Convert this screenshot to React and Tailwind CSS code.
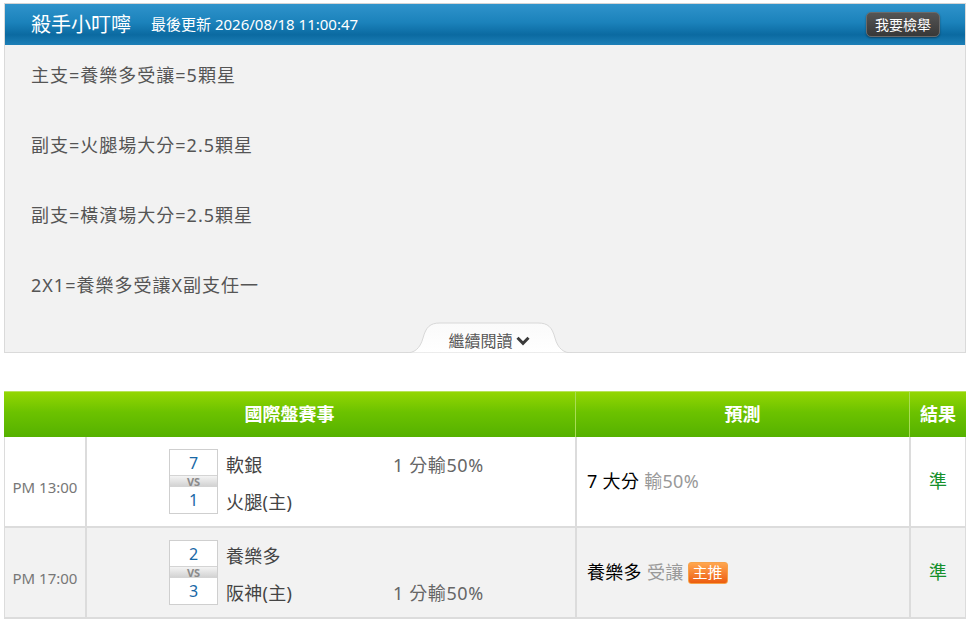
import React from 'react';

const font = { fontFamily: '"Noto Sans", "Noto Sans CJK TC", sans-serif' };

const games = [
  {
    time: 'PM 13:00',
    away: { score: 7, name: '軟銀' },
    home: { score: 1, name: '火腿(主)' },
    line: '1 分輸50%',
    lineOnHome: false,
    pick: '7 大分',
    pickNote: '輸50%',
    hot: false,
    result: '準',
  },
  {
    time: 'PM 17:00',
    away: { score: 2, name: '養樂多' },
    home: { score: 3, name: '阪神(主)' },
    line: '1 分輸50%',
    lineOnHome: true,
    pick: '養樂多',
    pickNote: '受讓',
    hot: true,
    result: '準',
  },
];

const tips = [
  '主支=養樂多受讓=5顆星',
  '副支=火腿場大分=2.5顆星',
  '副支=橫濱場大分=2.5顆星',
  '2X1=養樂多受讓X副支任一',
];

function ScoreBox({ away, home }) {
  return (
    <div className="w-[49px] border border-[#cfcfcf] bg-white text-center text-[16px] leading-none text-[#1768a6]">
      <div className="h-[25px] flex items-center justify-center">{away}</div>
      <div className="h-[12px] flex items-center justify-center bg-gradient-to-b from-[#f4f4f4] to-[#d3d3d3] border-y border-[#d4d4d4] text-[11px] font-bold text-[#8a8a8a]">
        VS
      </div>
      <div className="h-[26px] flex items-center justify-center">{home}</div>
    </div>
  );
}

function GameRow({ g, shaded }) {
  return (
    <div className={`flex h-[91px] border-b-2 border-[#dcdcdc] ${shaded ? 'bg-[#f2f2f2]' : 'bg-white'}`}>
      <div className="w-[82px] flex items-center justify-center text-[15px] text-[#777] border-r-2 border-[#dcdcdc] pt-[12px]">
        {g.time}
      </div>
      <div className="w-[490px] flex items-center pl-[82px] border-r-2 border-[#dcdcdc]">
        <ScoreBox away={g.away.score} home={g.home.score} />
        <div className="flex flex-col justify-between h-[64px] ml-[8px] w-[167px] text-[18px] text-[#444] leading-none tracking-[0.3px]">
          <div className="pt-[6px]">{g.away.name}</div>
          <div className="pb-[3px]">{g.home.name}</div>
        </div>
        <div className="flex flex-col justify-between h-[64px] text-[18px] text-[#666] leading-none tracking-[0.6px]">
          <div className="pt-[6px]">{g.lineOnHome ? '' : g.line}</div>
          <div className="pb-[3px]">{g.lineOnHome ? g.line : ''}</div>
        </div>
      </div>
      <div className="w-[334px] flex items-center pl-[10px] border-r-2 border-[#dcdcdc] text-[18px] tracking-[0.3px]">
        <span className="text-black">{g.pick}</span>
        <span className="ml-[5px] text-[#999]">{g.pickNote}</span>
        {g.hot && (
          <span className="ml-[4px] w-[40px] h-[22px] flex items-center justify-center rounded-[3px] border border-[#f7a24a] bg-gradient-to-b from-[#ffa64d] to-[#ec5c0c] text-white text-[15px] leading-none tracking-normal">
            主推
          </span>
        )}
      </div>
      <div className="flex-1 flex items-center justify-center text-[18px] text-[#16902b]">{g.result}</div>
    </div>
  );
}

export default function App() {
  return (
    <div className="w-[976px] h-[629px] bg-white overflow-hidden" style={font}>
      <div className="ml-[4px] mt-[3px] w-[962px] border border-[#dadada] border-t-[#d4d4d4]">
        {/* title bar */}
        <div className="h-[41px] flex items-center pl-[26px] pr-[25px] bg-[linear-gradient(to_bottom,#2f93cb_0%,#1b82bb_45%,#0b6aa1_75%,#1d7fb7_100%)]">
          <span className="text-[20px] text-white">殺手小叮嚀</span>
          <span className="ml-[20px] text-[15px] text-white">最後更新 2026/08/18 11:00:47</span>
          <span className="ml-auto h-[25px] w-[74px] flex items-center justify-center rounded-[5px] border border-[#6a6a6a] bg-gradient-to-b from-[#555] to-[#383838] text-[14px] text-white shadow-[0_1px_2px_rgba(0,0,0,0.4)]">
            我要檢舉
          </span>
        </div>

        {/* notes */}
        <div className="relative h-[307px] bg-[#f2f2f2] pl-[26px] pt-[17px]">
          {tips.map((t) => (
            <div key={t} className="h-[70px] text-[18px] text-[#555] leading-[26px] tracking-[1px]">
              {t}
            </div>
          ))}
          <div className="absolute left-[401px] bottom-[-1px] w-[166px] h-[31px]">
            <svg className="absolute inset-0" width="166" height="31" viewBox="0 0 166 31">
              <defs>
                <linearGradient id="tabFill" x1="0" y1="0" x2="0" y2="1">
                  <stop offset="0" stopColor="#fafafa" />
                  <stop offset="1" stopColor="#ffffff" />
                </linearGradient>
              </defs>
              <path
                d="M0 31 C8 31 14 27 17 16 C20 5 24 1 34 1 L132 1 C142 1 146 5 149 16 C152 27 158 31 166 31 Z"
                fill="url(#tabFill)"
                stroke="#d8d8d8"
                strokeWidth="1"
              />
            </svg>
            <div className="relative h-full flex items-center justify-center pt-[6px] text-[16px] text-[#555]">
              繼續閱讀
              <svg className="ml-[3px]" width="14" height="10" viewBox="0 0 14 10">
                <path d="M1.5 1.8 L7 7.3 L12.5 1.8" fill="none" stroke="#3a3a3a" strokeWidth="3" />
              </svg>
            </div>
          </div>
        </div>
      </div>

      {/* match table */}
      <div className="ml-[4px] mt-[38px] w-[962px]">
        <div className="flex h-[46px] border-t border-[#b8e35a] bg-[linear-gradient(to_bottom,#93d602_0%,#6cc200_45%,#55b100_100%)] text-[18px] font-bold text-white">
          <div className="w-[572px] flex items-center justify-center border-r border-[#a9dd55]">國際盤賽事</div>
          <div className="w-[334px] flex items-center justify-center border-r border-[#a9dd55]">預測</div>
          <div className="flex-1 flex items-center justify-center">結果</div>
        </div>
        <div className="border-x border-[#dcdcdc]">
          {games.map((g, i) => (
            <GameRow key={g.time} g={g} shaded={i % 2 === 1} />
          ))}
        </div>
      </div>
    </div>
  );
}
